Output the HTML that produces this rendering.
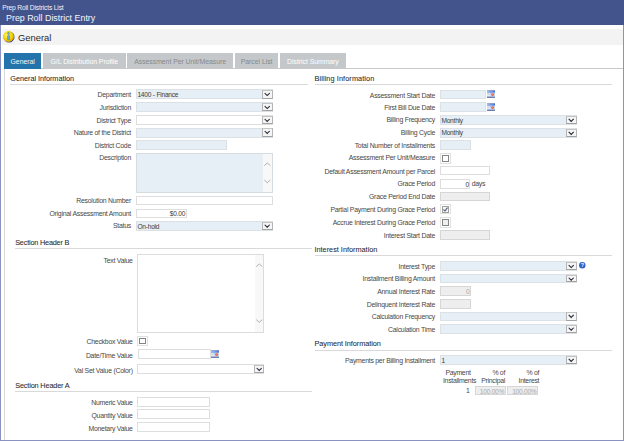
<!DOCTYPE html>
<html><head><meta charset="utf-8"><style>
html,body{margin:0;padding:0;}
body{width:624px;height:441px;position:relative;overflow:hidden;background:#ffffff;font-family:"Liberation Sans", sans-serif;}
.t{position:absolute;white-space:nowrap;line-height:1;}
.r{position:absolute;}
svg.r{overflow:visible;}
</style></head><body>
<div class="r" style="left:0.00px;top:0.00px;width:624.00px;height:25.00px;background:#43538c;"></div>
<div class="t" style="left:2.20px;top:5.00px;font-size:6.7px;color:#f0f2fa;font-weight:normal;letter-spacing:-0.17px;">Prep Roll Districts List</div>
<div class="t" style="left:6.00px;top:14.00px;font-size:8.9px;color:#f4f6fc;font-weight:normal;letter-spacing:0px;">Prep Roll District Entry</div>
<div class="r" style="left:0.00px;top:25.00px;width:1.00px;height:416.00px;background:#8a92c2;"></div>
<div class="r" style="left:623.00px;top:25.00px;width:1.00px;height:416.00px;background:#8a92c2;"></div>
<div class="r" style="left:0.00px;top:440.00px;width:624.00px;height:1.00px;background:#8a92c2;"></div>
<div class="r" style="left:2.00px;top:29.00px;width:621.00px;height:16.00px;background:#f3f3f3;"></div>
<svg class="r" style="left:3.4px;top:30.7px" width="12" height="12" viewBox="0 0 12 12">
<defs><radialGradient id="yg" cx="0.4" cy="0.35" r="0.7"><stop offset="0" stop-color="#fff86a"/><stop offset="0.6" stop-color="#f2d200"/><stop offset="1" stop-color="#d9a400"/></radialGradient></defs>
<circle cx="6.0" cy="6.0" r="5.5" fill="#34498f"/>
<circle cx="5.5" cy="5.5" r="5.4" fill="url(#yg)"/>
<circle cx="5.5" cy="2.4" r="1.0" fill="#62aef5" stroke="#33508a" stroke-width="0.35"/>
<rect x="4.6" y="4.4" width="1.9" height="4.4" rx="0.4" fill="#62aef5" stroke="#33508a" stroke-width="0.35"/>
</svg>
<div class="t" style="left:18.00px;top:33.00px;font-size:9.4px;color:#2a2a2a;font-weight:normal;letter-spacing:0px;">General</div>
<div class="r" style="left:4.00px;top:68.00px;width:619.00px;height:1.00px;background:#c8c8c8;"></div>
<div class="r" style="left:4.00px;top:68.00px;width:1.00px;height:372.00px;background:#d8d8d8;"></div>
<div class="r" style="left:4.30px;top:53.00px;width:36.70px;height:16.00px;background:#2274aa;"></div>
<div class="t" style="left:-77.35px;width:200px;top:59.00px;font-size:6.9px;color:#f4f8fc;font-weight:normal;letter-spacing:-0.05px;text-align:center;">General</div>
<div class="r" style="left:42.60px;top:53.00px;width:83.40px;height:15.00px;background:#c4c8cb;"></div>
<div class="t" style="left:-15.70px;width:200px;top:59.00px;font-size:6.9px;color:#ffffff;font-weight:normal;letter-spacing:-0.05px;text-align:center;">G/L Distribution Profile</div>
<div class="r" style="left:127.00px;top:53.00px;width:106.20px;height:15.00px;background:#c4c8cb;"></div>
<div class="t" style="left:80.10px;width:200px;top:59.00px;font-size:6.9px;color:#86888a;font-weight:normal;letter-spacing:-0.05px;text-align:center;">Assessment Per Unit/Measure</div>
<div class="r" style="left:234.90px;top:53.00px;width:43.40px;height:15.00px;background:#c4c8cb;"></div>
<div class="t" style="left:156.60px;width:200px;top:59.00px;font-size:6.9px;color:#86888a;font-weight:normal;letter-spacing:-0.05px;text-align:center;">Parcel List</div>
<div class="r" style="left:279.90px;top:53.00px;width:66.10px;height:15.00px;background:#c4c8cb;"></div>
<div class="t" style="left:212.95px;width:200px;top:59.00px;font-size:6.9px;color:#ffffff;font-weight:normal;letter-spacing:-0.05px;text-align:center;">District Summary</div>
<div class="t" style="left:10.30px;top:75.00px;font-size:7.3px;color:#2a2a2a;font-weight:normal;letter-spacing:-0.04px;-webkit-text-stroke:0.06px #2a2a2a;">General Information</div>
<div class="r" style="left:10.30px;top:84.00px;width:297.70px;height:1.00px;background:#d9d9d9;"></div>
<div class="t" style="right:493.00px;top:92.00px;font-size:6.9px;color:#474747;font-weight:normal;letter-spacing:-0.25px;text-align:right;">Department</div>
<div class="t" style="right:493.00px;top:105.00px;font-size:6.9px;color:#474747;font-weight:normal;letter-spacing:-0.25px;text-align:right;">Jurisdiction</div>
<div class="t" style="right:493.00px;top:118.00px;font-size:6.9px;color:#474747;font-weight:normal;letter-spacing:-0.25px;text-align:right;">District Type</div>
<div class="t" style="right:493.00px;top:130.00px;font-size:6.9px;color:#474747;font-weight:normal;letter-spacing:-0.25px;text-align:right;">Nature of the District</div>
<div class="t" style="right:493.00px;top:143.00px;font-size:6.9px;color:#474747;font-weight:normal;letter-spacing:-0.25px;text-align:right;">District Code</div>
<div class="r" style="left:136.10px;top:89.40px;width:136.50px;height:10.10px;background:#e7eff6;border:1px solid #dce1e5;box-sizing:border-box;"></div>
<div class="r" style="left:262.20px;top:90.20px;width:10.40px;height:8.50px;background:#f5f5f5;border:1px solid #b0b0b0;box-sizing:border-box;border-color:#c4c4c4 #b4b4b4 #a2a2a2 #b4b4b4;"></div>
<svg class="r" style="left:262.20px;top:90.20px" width="10.40" height="8.50" viewBox="0 0 10.40 8.50"><path d="M2.70 3.05 L5.20 5.55 L7.70 3.05" fill="none" stroke="#1e2234" stroke-width="1.05"/></svg>
<div class="t" style="left:137.40px;top:92.00px;font-size:6.6px;color:#3a3a3a;font-weight:normal;letter-spacing:-0.22px;">1400 - Finance</div>
<div class="r" style="left:136.10px;top:102.10px;width:136.50px;height:10.10px;background:#e7eff6;border:1px solid #dce1e5;box-sizing:border-box;"></div>
<div class="r" style="left:262.20px;top:102.90px;width:10.40px;height:8.50px;background:#f5f5f5;border:1px solid #b0b0b0;box-sizing:border-box;border-color:#c4c4c4 #b4b4b4 #a2a2a2 #b4b4b4;"></div>
<svg class="r" style="left:262.20px;top:102.90px" width="10.40" height="8.50" viewBox="0 0 10.40 8.50"><path d="M2.70 3.05 L5.20 5.55 L7.70 3.05" fill="none" stroke="#1e2234" stroke-width="1.05"/></svg>
<div class="r" style="left:136.10px;top:114.90px;width:136.50px;height:10.00px;background:#ffffff;border:1px solid #dedede;box-sizing:border-box;"></div>
<div class="r" style="left:262.20px;top:115.70px;width:10.40px;height:8.40px;background:#f5f5f5;border:1px solid #b0b0b0;box-sizing:border-box;border-color:#c4c4c4 #b4b4b4 #a2a2a2 #b4b4b4;"></div>
<svg class="r" style="left:262.20px;top:115.70px" width="10.40" height="8.40" viewBox="0 0 10.40 8.40"><path d="M2.70 3.00 L5.20 5.50 L7.70 3.00" fill="none" stroke="#1e2234" stroke-width="1.05"/></svg>
<div class="r" style="left:136.10px;top:127.60px;width:136.50px;height:10.00px;background:#e7eff6;border:1px solid #dce1e5;box-sizing:border-box;"></div>
<div class="r" style="left:262.20px;top:128.40px;width:10.40px;height:8.40px;background:#f5f5f5;border:1px solid #b0b0b0;box-sizing:border-box;border-color:#c4c4c4 #b4b4b4 #a2a2a2 #b4b4b4;"></div>
<svg class="r" style="left:262.20px;top:128.40px" width="10.40" height="8.40" viewBox="0 0 10.40 8.40"><path d="M2.70 3.00 L5.20 5.50 L7.70 3.00" fill="none" stroke="#1e2234" stroke-width="1.05"/></svg>
<div class="r" style="left:136.10px;top:140.30px;width:90.60px;height:9.50px;background:#e7eff6;border:1px solid #dce1e5;box-sizing:border-box;"></div>
<div class="t" style="right:493.00px;top:155.00px;font-size:6.9px;color:#474747;font-weight:normal;letter-spacing:-0.25px;text-align:right;">Description</div>
<div class="r" style="left:136.10px;top:152.90px;width:136.50px;height:39.90px;background:#e7eff6;border:1px solid #d6dbe0;box-sizing:border-box;"></div>
<div class="r" style="left:263.30px;top:153.90px;width:8.30px;height:37.90px;background:#f8f8f8;"></div>
<svg class="r" style="left:263.30px;top:152.90px" width="8.3" height="39.90" viewBox="0 0 8.3 39.90"><path d="M1.3 12.60 L4.3 10.0 L7.3 12.6" fill="none" stroke="#b0b0b0" stroke-width="1"/><path d="M1.3 27.10 L4.3 29.70 L7.3 27.10" fill="none" stroke="#b0b0b0" stroke-width="1"/></svg>
<div class="t" style="right:493.00px;top:198.00px;font-size:6.9px;color:#474747;font-weight:normal;letter-spacing:-0.25px;text-align:right;">Resolution Number</div>
<div class="r" style="left:136.10px;top:195.70px;width:136.50px;height:9.80px;background:#ffffff;border:1px solid #dedede;box-sizing:border-box;"></div>
<div class="t" style="right:493.00px;top:211.00px;font-size:6.9px;color:#474747;font-weight:normal;letter-spacing:-0.25px;text-align:right;">Original Assessment Amount</div>
<div class="r" style="left:136.10px;top:208.60px;width:50.60px;height:9.00px;background:#ffffff;border:1px solid #dedede;box-sizing:border-box;"></div>
<div class="t" style="right:438.90px;top:211.00px;font-size:6.6px;color:#3a3a3a;font-weight:normal;letter-spacing:-0.25px;text-align:right;">$0.00</div>
<div class="t" style="right:493.00px;top:223.00px;font-size:6.9px;color:#474747;font-weight:normal;letter-spacing:-0.25px;text-align:right;">Status</div>
<div class="r" style="left:136.10px;top:221.10px;width:136.50px;height:9.50px;background:#e7eff6;border:1px solid #dce1e5;box-sizing:border-box;"></div>
<div class="r" style="left:262.20px;top:221.90px;width:10.40px;height:7.90px;background:#f5f5f5;border:1px solid #b0b0b0;box-sizing:border-box;border-color:#c4c4c4 #b4b4b4 #a2a2a2 #b4b4b4;"></div>
<svg class="r" style="left:262.20px;top:221.90px" width="10.40" height="7.90" viewBox="0 0 10.40 7.90"><path d="M2.70 2.75 L5.20 5.25 L7.70 2.75" fill="none" stroke="#1e2234" stroke-width="1.05"/></svg>
<div class="t" style="left:137.40px;top:224.00px;font-size:6.6px;color:#3a3a3a;font-weight:normal;letter-spacing:-0.22px;">On-hold</div>
<div class="t" style="left:15.20px;top:239.00px;font-size:7.3px;color:#2a2a2a;font-weight:normal;letter-spacing:-0.2px;-webkit-text-stroke:0.06px #2a2a2a;">Section Header B</div>
<div class="r" style="left:15.20px;top:248.00px;width:297.30px;height:1.00px;background:#d9d9d9;"></div>
<div class="t" style="right:491.30px;top:258.00px;font-size:6.9px;color:#474747;font-weight:normal;letter-spacing:-0.25px;text-align:right;">Text Value</div>
<div class="r" style="left:137.30px;top:254.10px;width:126.70px;height:78.50px;background:#ffffff;border:1px solid #dcdcdc;box-sizing:border-box;"></div>
<div class="r" style="left:254.70px;top:255.10px;width:8.30px;height:76.50px;background:#f8f8f8;"></div>
<svg class="r" style="left:254.70px;top:254.10px" width="8.3" height="78.50" viewBox="0 0 8.3 78.50"><path d="M1.3 12.60 L4.3 10.0 L7.3 12.6" fill="none" stroke="#b0b0b0" stroke-width="1"/><path d="M1.3 65.70 L4.3 68.30 L7.3 65.70" fill="none" stroke="#b0b0b0" stroke-width="1"/></svg>
<div class="t" style="right:491.30px;top:339.00px;font-size:6.9px;color:#474747;font-weight:normal;letter-spacing:-0.25px;text-align:right;">Checkbox Value</div>
<div class="r" style="left:137.20px;top:335.50px;width:10.60px;height:10.60px;background:#ffffff;border:1px solid #e1e1e1;box-sizing:border-box;"></div>
<div class="r" style="left:139.30px;top:337.50px;width:6.70px;height:6.70px;background:#ffffff;border:1px solid #858585;box-sizing:border-box;"></div>
<div class="t" style="right:491.30px;top:353.00px;font-size:6.9px;color:#474747;font-weight:normal;letter-spacing:-0.25px;text-align:right;">Date/Time Value</div>
<div class="r" style="left:138.20px;top:349.30px;width:72.60px;height:10.20px;background:#ffffff;border:1px solid #dedede;box-sizing:border-box;"></div>
<svg class="r" style="left:211.40px;top:350.30px" width="8" height="7.7" viewBox="0 0 8 7.7">
<defs><linearGradient id="cg3503" x1="0" y1="0" x2="1" y2="0"><stop offset="0" stop-color="#a4c0f0"/><stop offset="1" stop-color="#4674de"/></linearGradient></defs>
<rect x="0" y="0" width="8" height="7.7" fill="#b4c7ea"/>
<rect x="0" y="0" width="8" height="0.6" fill="#9a9288"/>
<rect x="0" y="0.6" width="8" height="2.2" fill="url(#cg3503)"/>
<rect x="0.3" y="3.0" width="1.3" height="3.4" fill="#dfe8f7"/>
<rect x="2.0" y="3.0" width="1.3" height="3.4" fill="#d3def3"/>
<rect x="0" y="5.5" width="4" height="0.6" fill="#f4f7fd"/>
<rect x="4" y="2.8" width="4" height="4" fill="#c9d7f0"/>
<circle cx="5.6" cy="4.6" r="1.45" fill="#e2643f"/>
<circle cx="5.3" cy="4.2" r="0.55" fill="#f5a184"/>
<rect x="0" y="6.8" width="8" height="0.9" fill="#44588a"/>
</svg>
<div class="t" style="right:491.30px;top:368.00px;font-size:6.9px;color:#474747;font-weight:normal;letter-spacing:-0.25px;text-align:right;">Val Set Value (Color)</div>
<div class="r" style="left:137.20px;top:364.00px;width:126.80px;height:10.00px;background:#ffffff;border:1px solid #dedede;box-sizing:border-box;"></div>
<div class="r" style="left:253.60px;top:364.80px;width:10.40px;height:8.40px;background:#f5f5f5;border:1px solid #b0b0b0;box-sizing:border-box;border-color:#c4c4c4 #b4b4b4 #a2a2a2 #b4b4b4;"></div>
<svg class="r" style="left:253.60px;top:364.80px" width="10.40" height="8.40" viewBox="0 0 10.40 8.40"><path d="M2.70 3.00 L5.20 5.50 L7.70 3.00" fill="none" stroke="#1e2234" stroke-width="1.05"/></svg>
<div class="t" style="left:15.20px;top:382.00px;font-size:7.3px;color:#2a2a2a;font-weight:normal;letter-spacing:-0.15px;-webkit-text-stroke:0.06px #2a2a2a;">Section Header A</div>
<div class="r" style="left:15.20px;top:390.80px;width:297.30px;height:1.00px;background:#d9d9d9;"></div>
<div class="t" style="right:491.30px;top:400.00px;font-size:6.9px;color:#474747;font-weight:normal;letter-spacing:-0.25px;text-align:right;">Numeric Value</div>
<div class="r" style="left:137.20px;top:396.90px;width:73.00px;height:9.70px;background:#ffffff;border:1px solid #dedede;box-sizing:border-box;"></div>
<div class="t" style="right:491.30px;top:413.00px;font-size:6.9px;color:#474747;font-weight:normal;letter-spacing:-0.25px;text-align:right;">Quantity Value</div>
<div class="r" style="left:137.20px;top:409.30px;width:73.00px;height:9.60px;background:#ffffff;border:1px solid #dedede;box-sizing:border-box;"></div>
<div class="t" style="right:491.30px;top:426.00px;font-size:6.9px;color:#474747;font-weight:normal;letter-spacing:-0.25px;text-align:right;">Monetary Value</div>
<div class="r" style="left:137.20px;top:422.30px;width:73.00px;height:9.40px;background:#ffffff;border:1px solid #dedede;box-sizing:border-box;"></div>
<div class="t" style="left:314.50px;top:75.00px;font-size:7.3px;color:#2a2a2a;font-weight:normal;letter-spacing:0.1px;-webkit-text-stroke:0.06px #2a2a2a;">Billing Information</div>
<div class="r" style="left:314.50px;top:84.00px;width:297.90px;height:1.00px;background:#d9d9d9;"></div>
<div class="t" style="right:189.00px;top:93.00px;font-size:6.9px;color:#474747;font-weight:normal;letter-spacing:-0.25px;text-align:right;">Assessment Start Date</div>
<div class="r" style="left:440.10px;top:89.50px;width:45.90px;height:9.80px;background:#e7eff6;border:1px solid #dce1e5;box-sizing:border-box;"></div>
<svg class="r" style="left:487.00px;top:90.10px" width="8" height="7.7" viewBox="0 0 8 7.7">
<defs><linearGradient id="cg901" x1="0" y1="0" x2="1" y2="0"><stop offset="0" stop-color="#a4c0f0"/><stop offset="1" stop-color="#4674de"/></linearGradient></defs>
<rect x="0" y="0" width="8" height="7.7" fill="#b4c7ea"/>
<rect x="0" y="0" width="8" height="0.6" fill="#9a9288"/>
<rect x="0" y="0.6" width="8" height="2.2" fill="url(#cg901)"/>
<rect x="0.3" y="3.0" width="1.3" height="3.4" fill="#dfe8f7"/>
<rect x="2.0" y="3.0" width="1.3" height="3.4" fill="#d3def3"/>
<rect x="0" y="5.5" width="4" height="0.6" fill="#f4f7fd"/>
<rect x="4" y="2.8" width="4" height="4" fill="#c9d7f0"/>
<circle cx="5.6" cy="4.6" r="1.45" fill="#e2643f"/>
<circle cx="5.3" cy="4.2" r="0.55" fill="#f5a184"/>
<rect x="0" y="6.8" width="8" height="0.9" fill="#44588a"/>
</svg>
<div class="t" style="right:189.00px;top:105.00px;font-size:6.9px;color:#474747;font-weight:normal;letter-spacing:-0.25px;text-align:right;">First Bill Due Date</div>
<div class="r" style="left:440.10px;top:102.20px;width:45.90px;height:9.80px;background:#e7eff6;border:1px solid #dce1e5;box-sizing:border-box;"></div>
<svg class="r" style="left:487.00px;top:102.90px" width="8" height="7.7" viewBox="0 0 8 7.7">
<defs><linearGradient id="cg1029" x1="0" y1="0" x2="1" y2="0"><stop offset="0" stop-color="#a4c0f0"/><stop offset="1" stop-color="#4674de"/></linearGradient></defs>
<rect x="0" y="0" width="8" height="7.7" fill="#b4c7ea"/>
<rect x="0" y="0" width="8" height="0.6" fill="#9a9288"/>
<rect x="0" y="0.6" width="8" height="2.2" fill="url(#cg1029)"/>
<rect x="0.3" y="3.0" width="1.3" height="3.4" fill="#dfe8f7"/>
<rect x="2.0" y="3.0" width="1.3" height="3.4" fill="#d3def3"/>
<rect x="0" y="5.5" width="4" height="0.6" fill="#f4f7fd"/>
<rect x="4" y="2.8" width="4" height="4" fill="#c9d7f0"/>
<circle cx="5.6" cy="4.6" r="1.45" fill="#e2643f"/>
<circle cx="5.3" cy="4.2" r="0.55" fill="#f5a184"/>
<rect x="0" y="6.8" width="8" height="0.9" fill="#44588a"/>
</svg>
<div class="t" style="right:189.00px;top:117.00px;font-size:6.9px;color:#474747;font-weight:normal;letter-spacing:-0.25px;text-align:right;">Billing Frequency</div>
<div class="r" style="left:440.10px;top:115.00px;width:136.60px;height:9.90px;background:#e7eff6;border:1px solid #dce1e5;box-sizing:border-box;"></div>
<div class="r" style="left:566.30px;top:115.80px;width:10.40px;height:8.30px;background:#f5f5f5;border:1px solid #b0b0b0;box-sizing:border-box;border-color:#c4c4c4 #b4b4b4 #a2a2a2 #b4b4b4;"></div>
<svg class="r" style="left:566.30px;top:115.80px" width="10.40" height="8.30" viewBox="0 0 10.40 8.30"><path d="M2.70 2.95 L5.20 5.45 L7.70 2.95" fill="none" stroke="#1e2234" stroke-width="1.05"/></svg>
<div class="t" style="left:441.40px;top:118.00px;font-size:6.6px;color:#3a3a3a;font-weight:normal;letter-spacing:-0.22px;">Monthly</div>
<div class="t" style="right:189.00px;top:130.00px;font-size:6.9px;color:#474747;font-weight:normal;letter-spacing:-0.25px;text-align:right;">Billing Cycle</div>
<div class="r" style="left:440.10px;top:127.70px;width:136.60px;height:9.90px;background:#e7eff6;border:1px solid #dce1e5;box-sizing:border-box;"></div>
<div class="r" style="left:566.30px;top:128.50px;width:10.40px;height:8.30px;background:#f5f5f5;border:1px solid #b0b0b0;box-sizing:border-box;border-color:#c4c4c4 #b4b4b4 #a2a2a2 #b4b4b4;"></div>
<svg class="r" style="left:566.30px;top:128.50px" width="10.40" height="8.30" viewBox="0 0 10.40 8.30"><path d="M2.70 2.95 L5.20 5.45 L7.70 2.95" fill="none" stroke="#1e2234" stroke-width="1.05"/></svg>
<div class="t" style="left:441.40px;top:130.00px;font-size:6.6px;color:#3a3a3a;font-weight:normal;letter-spacing:-0.22px;">Monthly</div>
<div class="t" style="right:189.00px;top:143.00px;font-size:6.9px;color:#474747;font-weight:normal;letter-spacing:-0.25px;text-align:right;">Total Number of Installments</div>
<div class="r" style="left:440.10px;top:140.30px;width:30.90px;height:9.70px;background:#e7eff6;border:1px solid #dce1e5;box-sizing:border-box;"></div>
<div class="t" style="right:189.00px;top:155.00px;font-size:6.9px;color:#474747;font-weight:normal;letter-spacing:-0.25px;text-align:right;">Assessment Per Unit/Measure</div>
<div class="r" style="left:440.10px;top:153.10px;width:10.60px;height:10.60px;background:#ffffff;border:1px solid #e1e1e1;box-sizing:border-box;"></div>
<div class="r" style="left:442.20px;top:155.10px;width:6.70px;height:6.70px;background:#ffffff;border:1px solid #858585;box-sizing:border-box;"></div>
<div class="t" style="right:189.00px;top:169.00px;font-size:6.9px;color:#474747;font-weight:normal;letter-spacing:-0.25px;text-align:right;">Default Assessment Amount per Parcel</div>
<div class="r" style="left:440.10px;top:166.20px;width:50.40px;height:9.30px;background:#ffffff;border:1px solid #dedede;box-sizing:border-box;"></div>
<div class="t" style="right:189.00px;top:181.00px;font-size:6.9px;color:#474747;font-weight:normal;letter-spacing:-0.25px;text-align:right;">Grace Period</div>
<div class="r" style="left:440.10px;top:179.10px;width:30.40px;height:9.70px;background:#ffffff;border:1px solid #dedede;box-sizing:border-box;"></div>
<div class="t" style="right:155.10px;top:182.00px;font-size:6.6px;color:#3a3a3a;font-weight:normal;letter-spacing:-0.25px;text-align:right;">0</div>
<div class="t" style="left:471.80px;top:181.00px;font-size:6.9px;color:#474747;font-weight:normal;letter-spacing:-0.3px;">days</div>
<div class="t" style="right:189.00px;top:194.00px;font-size:6.9px;color:#474747;font-weight:normal;letter-spacing:-0.25px;text-align:right;">Grace Period End Date</div>
<div class="r" style="left:440.10px;top:191.60px;width:50.40px;height:9.70px;background:#eeeeee;border:1px solid #d6d6d6;box-sizing:border-box;"></div>
<div class="t" style="right:189.00px;top:207.00px;font-size:6.9px;color:#474747;font-weight:normal;letter-spacing:-0.25px;text-align:right;">Partial Payment During Grace Period</div>
<div class="r" style="left:440.10px;top:203.90px;width:10.60px;height:10.60px;background:#ffffff;border:1px solid #e1e1e1;box-sizing:border-box;"></div>
<div class="r" style="left:442.20px;top:205.90px;width:6.70px;height:6.70px;background:#f3f3f3;border:1px solid #a0a0a0;box-sizing:border-box;"></div>
<svg class="r" style="left:440.10px;top:203.90px" width="10.6" height="10.6" viewBox="0 0 10.6 10.6"><path d="M3.4 5.5 L4.9 7.0 L7.5 3.6" fill="none" stroke="#4a5570" stroke-width="1.05"/></svg>
<div class="t" style="right:189.00px;top:220.00px;font-size:6.9px;color:#474747;font-weight:normal;letter-spacing:-0.25px;text-align:right;">Accrue Interest During Grace Period</div>
<div class="r" style="left:440.10px;top:217.30px;width:10.60px;height:10.60px;background:#ffffff;border:1px solid #e1e1e1;box-sizing:border-box;"></div>
<div class="r" style="left:442.20px;top:219.30px;width:6.70px;height:6.70px;background:#efefef;border:1px solid #858585;box-sizing:border-box;"></div>
<div class="t" style="right:189.00px;top:233.00px;font-size:6.9px;color:#474747;font-weight:normal;letter-spacing:-0.25px;text-align:right;">Interest Start Date</div>
<div class="r" style="left:440.10px;top:230.20px;width:50.40px;height:9.50px;background:#eeeeee;border:1px solid #d6d6d6;box-sizing:border-box;"></div>
<div class="t" style="left:314.50px;top:246.00px;font-size:7.3px;color:#2a2a2a;font-weight:normal;letter-spacing:0px;-webkit-text-stroke:0.06px #2a2a2a;">Interest Information</div>
<div class="r" style="left:314.50px;top:255.20px;width:297.90px;height:1.00px;background:#d9d9d9;"></div>
<div class="t" style="right:189.00px;top:264.00px;font-size:6.9px;color:#474747;font-weight:normal;letter-spacing:-0.25px;text-align:right;">Interest Type</div>
<div class="r" style="left:440.10px;top:260.80px;width:136.60px;height:10.10px;background:#e7eff6;border:1px solid #dce1e5;box-sizing:border-box;"></div>
<div class="r" style="left:566.30px;top:261.60px;width:10.40px;height:8.50px;background:#f5f5f5;border:1px solid #b0b0b0;box-sizing:border-box;border-color:#c4c4c4 #b4b4b4 #a2a2a2 #b4b4b4;"></div>
<svg class="r" style="left:566.30px;top:261.60px" width="10.40" height="8.50" viewBox="0 0 10.40 8.50"><path d="M2.70 3.05 L5.20 5.55 L7.70 3.05" fill="none" stroke="#1e2234" stroke-width="1.05"/></svg>
<svg class="r" style="left:579.2px;top:262.3px" width="6.6" height="6.6" viewBox="0 0 6.6 6.6"><circle cx="3.3" cy="3.3" r="3.2" fill="#2c5fc8"/><text x="3.3" y="5.3" font-family="Liberation Sans" font-weight="bold" font-size="5.4" fill="#fff" text-anchor="middle">?</text></svg>
<div class="t" style="right:189.00px;top:276.00px;font-size:6.9px;color:#474747;font-weight:normal;letter-spacing:-0.25px;text-align:right;">Installment Billing Amount</div>
<div class="r" style="left:440.10px;top:273.70px;width:136.60px;height:9.50px;background:#e7eff6;border:1px solid #dce1e5;box-sizing:border-box;"></div>
<div class="r" style="left:566.30px;top:274.50px;width:10.40px;height:7.90px;background:#f5f5f5;border:1px solid #b0b0b0;box-sizing:border-box;border-color:#c4c4c4 #b4b4b4 #a2a2a2 #b4b4b4;"></div>
<svg class="r" style="left:566.30px;top:274.50px" width="10.40" height="7.90" viewBox="0 0 10.40 7.90"><path d="M2.70 2.75 L5.20 5.25 L7.70 2.75" fill="none" stroke="#1e2234" stroke-width="1.05"/></svg>
<div class="t" style="right:189.00px;top:289.00px;font-size:6.9px;color:#474747;font-weight:normal;letter-spacing:-0.25px;text-align:right;">Annual Interest Rate</div>
<div class="r" style="left:440.10px;top:286.00px;width:30.80px;height:9.70px;background:#eeeeee;border:1px solid #d6d6d6;box-sizing:border-box;"></div>
<div class="t" style="right:154.70px;top:289.00px;font-size:6.6px;color:#a9a9a9;font-weight:normal;letter-spacing:-0.25px;text-align:right;">0</div>
<div class="t" style="right:189.00px;top:302.00px;font-size:6.9px;color:#474747;font-weight:normal;letter-spacing:-0.25px;text-align:right;">Delinquent Interest Rate</div>
<div class="r" style="left:440.10px;top:299.00px;width:30.80px;height:9.60px;background:#eeeeee;border:1px solid #d6d6d6;box-sizing:border-box;"></div>
<div class="t" style="right:189.00px;top:314.00px;font-size:6.9px;color:#474747;font-weight:normal;letter-spacing:-0.25px;text-align:right;">Calculation Frequency</div>
<div class="r" style="left:440.10px;top:311.50px;width:136.60px;height:9.90px;background:#e7eff6;border:1px solid #dce1e5;box-sizing:border-box;"></div>
<div class="r" style="left:566.30px;top:312.30px;width:10.40px;height:8.30px;background:#f5f5f5;border:1px solid #b0b0b0;box-sizing:border-box;border-color:#c4c4c4 #b4b4b4 #a2a2a2 #b4b4b4;"></div>
<svg class="r" style="left:566.30px;top:312.30px" width="10.40" height="8.30" viewBox="0 0 10.40 8.30"><path d="M2.70 2.95 L5.20 5.45 L7.70 2.95" fill="none" stroke="#1e2234" stroke-width="1.05"/></svg>
<div class="t" style="right:189.00px;top:327.00px;font-size:6.9px;color:#474747;font-weight:normal;letter-spacing:-0.25px;text-align:right;">Calculation Time</div>
<div class="r" style="left:440.10px;top:324.40px;width:136.60px;height:9.50px;background:#e7eff6;border:1px solid #dce1e5;box-sizing:border-box;"></div>
<div class="r" style="left:566.30px;top:325.20px;width:10.40px;height:7.90px;background:#f5f5f5;border:1px solid #b0b0b0;box-sizing:border-box;border-color:#c4c4c4 #b4b4b4 #a2a2a2 #b4b4b4;"></div>
<svg class="r" style="left:566.30px;top:325.20px" width="10.40" height="7.90" viewBox="0 0 10.40 7.90"><path d="M2.70 2.75 L5.20 5.25 L7.70 2.75" fill="none" stroke="#1e2234" stroke-width="1.05"/></svg>
<div class="t" style="left:314.50px;top:340.00px;font-size:7.3px;color:#2a2a2a;font-weight:normal;letter-spacing:-0.06px;-webkit-text-stroke:0.06px #2a2a2a;">Payment Information</div>
<div class="r" style="left:314.50px;top:349.80px;width:297.90px;height:1.00px;background:#d9d9d9;"></div>
<div class="t" style="right:189.00px;top:358.00px;font-size:6.9px;color:#474747;font-weight:normal;letter-spacing:-0.25px;text-align:right;">Payments per Billing Installment</div>
<div class="r" style="left:440.10px;top:355.00px;width:136.60px;height:9.80px;background:#e7eff6;border:1px solid #dce1e5;box-sizing:border-box;"></div>
<div class="r" style="left:566.30px;top:355.80px;width:10.40px;height:8.20px;background:#f5f5f5;border:1px solid #b0b0b0;box-sizing:border-box;border-color:#c4c4c4 #b4b4b4 #a2a2a2 #b4b4b4;"></div>
<svg class="r" style="left:566.30px;top:355.80px" width="10.40" height="8.20" viewBox="0 0 10.40 8.20"><path d="M2.70 2.90 L5.20 5.40 L7.70 2.90" fill="none" stroke="#1e2234" stroke-width="1.05"/></svg>
<div class="t" style="left:441.40px;top:358.00px;font-size:6.6px;color:#3a3a3a;font-weight:normal;letter-spacing:-0.22px;">1</div>
<div class="t" style="left:358.00px;width:200px;top:370.00px;font-size:6.9px;color:#474747;font-weight:normal;letter-spacing:-0.3px;text-align:center;">Payment</div>
<div class="t" style="left:359.60px;width:200px;top:378.00px;font-size:6.9px;color:#474747;font-weight:normal;letter-spacing:-0.3px;text-align:center;">Installments</div>
<div class="t" style="right:119.00px;top:370.00px;font-size:6.9px;color:#474747;font-weight:normal;letter-spacing:-0.3px;text-align:right;">% of</div>
<div class="t" style="right:119.00px;top:378.00px;font-size:6.9px;color:#474747;font-weight:normal;letter-spacing:-0.3px;text-align:right;">Principal</div>
<div class="t" style="right:84.80px;top:370.00px;font-size:6.9px;color:#474747;font-weight:normal;letter-spacing:-0.3px;text-align:right;">% of</div>
<div class="t" style="right:84.80px;top:378.00px;font-size:6.9px;color:#474747;font-weight:normal;letter-spacing:-0.3px;text-align:right;">Interest</div>
<div class="t" style="right:154.40px;top:388.00px;font-size:6.9px;color:#474747;font-weight:normal;letter-spacing:-0.3px;text-align:right;">1</div>
<div class="r" style="left:475.20px;top:385.90px;width:30.50px;height:9.40px;background:#eeeeee;border:1px solid #d6d6d6;box-sizing:border-box;"></div>
<div class="t" style="right:119.90px;top:389.00px;font-size:6.6px;color:#aaaaaa;font-weight:normal;letter-spacing:-0.25px;text-align:right;">100.00%</div>
<div class="r" style="left:507.40px;top:385.90px;width:30.60px;height:9.40px;background:#eeeeee;border:1px solid #d6d6d6;box-sizing:border-box;"></div>
<div class="t" style="right:87.60px;top:389.00px;font-size:6.6px;color:#aaaaaa;font-weight:normal;letter-spacing:-0.25px;text-align:right;">100.00%</div>
</body></html>
